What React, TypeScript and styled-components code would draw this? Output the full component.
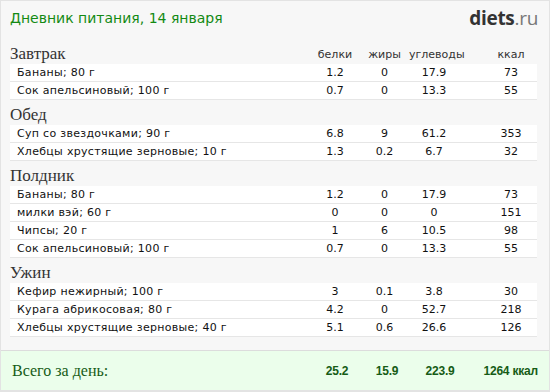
import React from "react";
import styled, { createGlobalStyle } from "styled-components";

const GlobalStyle = createGlobalStyle`
  html, body {
    margin: 0;
    padding: 0;
    background: #ffffff;
  }
  body {
    font-family: "DejaVu Sans", Verdana, sans-serif;
  }
`;

const Frame = styled.div`
  width: 550px;
  height: 392px;
  box-sizing: border-box;
  border: 1px solid #e3e3e3;
  background: #f7f7f7;
  display: flex;
  flex-direction: column;
`;

const TopBar = styled.header`
  height: 38px;
  display: flex;
  justify-content: space-between;
  align-items: center;
  padding: 0 11px 0 9px;
  box-sizing: border-box;
`;

const Title = styled.h1`
  margin: 0;
  font-family: "DejaVu Sans", Verdana, sans-serif;
  font-weight: normal;
  font-size: 14px;
  color: #138a13;
  padding-bottom: 4px;
`;

const Logo = styled.div`
  font-family: "Open Sans", "Liberation Sans", Arial, sans-serif;
  font-size: 19px;
  color: #333;
  letter-spacing: -0.3px;
  padding-bottom: 4px;

  b {
    font-weight: 700;
  }
  span {
    font-weight: 400;
    color: #777;
  }
`;

const Body = styled.div`
  padding: 0 12px 0 9px;
  flex: 1;
`;

const Grid = styled.div`
  display: grid;
  grid-template-columns: 1fr 50px 49px 50px 78px;
  align-items: center;
`;

const SectionHead = styled(Grid)`
  height: 25px;
  align-items: end;
  padding-bottom: 1px;
  box-sizing: border-box;
`;

const SectionName = styled.div`
  font-family: "Liberation Serif", "Times New Roman", serif;
  font-size: 17px;
  color: #333;
  line-height: 18px;
`;

const ColHead = styled.div<{ $last?: boolean }>`
  font-size: 11px;
  color: #333;
  text-align: center;
  line-height: 14px;
  padding-bottom: 1px;
  padding-left: ${(p) => (p.$last ? "26px" : "0")};
`;

const Row = styled(Grid)`
  height: 18px;
  background: #ffffff;
  border-bottom: 1px solid #e6e6e6;
  box-sizing: border-box;
  font-size: 11px;
  color: #111;
`;

const Name = styled.div`
  padding-left: 7px;
  letter-spacing: 0.3px;
  white-space: nowrap;
`;

const Num = styled.div<{ $last?: boolean }>`
  text-align: center;
  padding-left: ${(p) => (p.$last ? "26px" : "0")};
`;

const Footer = styled.footer`
  height: 41px;
  box-sizing: border-box;
  margin-top: 13px;
  border-top: 1px solid #dcdcdc;
  border-bottom: 1px solid #e3e3e3;
  background: #ebfeeb;
  padding: 0 11px;
  display: grid;
  grid-template-columns: 1fr 50px 50px 56px 70px;
  align-items: center;
  color: #165c16;
`;

const FooterLabel = styled.div`
  font-family: "Liberation Serif", "Times New Roman", serif;
  font-size: 16px;
`;

const FooterNum = styled.div<{ $right?: boolean }>`
  font-family: "Liberation Sans", Arial, sans-serif;
  font-weight: bold;
  font-size: 12px;
  letter-spacing: -0.2px;
  text-align: ${(p) => (p.$right ? "right" : "center")};
`;

type Item = [string, string, string, string, string];

const meals: { name: string; items: Item[] }[] = [
  {
    name: "Завтрак",
    items: [
      ["Бананы; 80 г", "1.2", "0", "17.9", "73"],
      ["Сок апельсиновый; 100 г", "0.7", "0", "13.3", "55"],
    ],
  },
  {
    name: "Обед",
    items: [
      ["Суп со звездочками; 90 г", "6.8", "9", "61.2", "353"],
      ["Хлебцы хрустящие зерновые; 10 г", "1.3", "0.2", "6.7", "32"],
    ],
  },
  {
    name: "Полдник",
    items: [
      ["Бананы; 80 г", "1.2", "0", "17.9", "73"],
      ["милки вэй; 60 г", "0", "0", "0", "151"],
      ["Чипсы; 20 г", "1", "6", "10.5", "98"],
      ["Сок апельсиновый; 100 г", "0.7", "0", "13.3", "55"],
    ],
  },
  {
    name: "Ужин",
    items: [
      ["Кефир нежирный; 100 г", "3", "0.1", "3.8", "30"],
      ["Курага абрикосовая; 80 г", "4.2", "0", "52.7", "218"],
      ["Хлебцы хрустящие зерновые; 40 г", "5.1", "0.6", "26.6", "126"],
    ],
  },
];

export default function App() {
  return (
    <>
      <GlobalStyle />
      <Frame>
        <TopBar>
          <Title>Дневник питания, 14 января</Title>
          <Logo>
            <b>diets</b>
            <span>.ru</span>
          </Logo>
        </TopBar>
        <Body>
          {meals.map((meal, i) => (
            <section key={meal.name}>
              <SectionHead>
                <SectionName>{meal.name}</SectionName>
                {i === 0 && (
                  <>
                    <ColHead>белки</ColHead>
                    <ColHead>жиры</ColHead>
                    <ColHead>углеводы</ColHead>
                    <ColHead $last>ккал</ColHead>
                  </>
                )}
              </SectionHead>
              {meal.items.map((it, j) => (
                <Row key={j}>
                  <Name>{it[0]}</Name>
                  <Num>{it[1]}</Num>
                  <Num>{it[2]}</Num>
                  <Num>{it[3]}</Num>
                  <Num $last>{it[4]}</Num>
                </Row>
              ))}
            </section>
          ))}
        </Body>
        <Footer>
          <FooterLabel>Всего за день:</FooterLabel>
          <FooterNum>25.2</FooterNum>
          <FooterNum>15.9</FooterNum>
          <FooterNum>223.9</FooterNum>
          <FooterNum $right>1264 ккал</FooterNum>
        </Footer>
      </Frame>
    </>
  );
}
